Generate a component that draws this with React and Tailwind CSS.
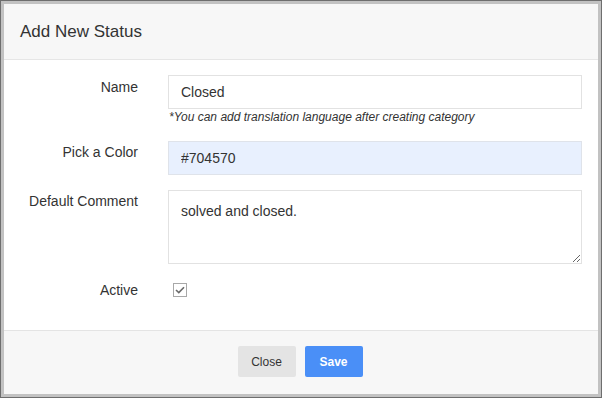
import React from "react";

export default function App() {
  return (
    <div className="w-[602px] h-[398px] bg-[#6e6e6e] p-px" style={{ fontFamily: '"Liberation Sans", Arial, sans-serif' }}>
      <div className="w-full h-full bg-[#c2c2c2] p-[3px]">
        <div className="w-full h-full bg-white flex flex-col">
          <div className="h-[56px] bg-[#f7f7f7] border-b border-[#e6e6e6] flex items-center pl-[16px] shrink-0">
            <h1 className="text-[17px] text-[#333] pt-[1px]">Add New Status</h1>
          </div>
          <div className="flex-1 flex flex-col pt-[15px] text-[14px] text-[#333]">
            <div className="flex">
              <label className="w-[134px] text-right pt-[2px]">Name</label>
              <div className="ml-[30px] w-[414px]">
                <input
                  readOnly
                  value="Closed"
                  className="w-full h-[34px] border border-[#e2e2e2] px-[12px] outline-none text-[14px] text-[#333] bg-white"
                />
                <div className="text-[12px] italic text-[#333] mt-[1px] pl-[1px] leading-[15px]">*You can add translation language after creating category</div>
              </div>
            </div>
            <div className="flex mt-[16px]">
              <label className="w-[134px] text-right pt-[1px]">Pick a Color</label>
              <div className="ml-[30px] w-[414px]">
                <input
                  readOnly
                  value="#704570"
                  className="w-full h-[34px] border border-[#dfe3ea] px-[12px] outline-none text-[14px] text-[#333] bg-[#e8f0fe]"
                />
              </div>
            </div>
            <div className="flex mt-[15px]">
              <label className="w-[134px] text-right pt-[1px]">Default Comment</label>
              <div className="ml-[30px] w-[414px]">
                <textarea
                  readOnly
                  value="solved and closed."
                  className="block w-full h-[74px] border border-[#e2e2e2] px-[12px] pt-[10px] outline-none text-[14px] text-[#333] bg-white"
                />
              </div>
            </div>
            <div className="flex mt-[17px]">
              <label className="w-[134px] text-right -mt-[1px]">Active</label>
              <div className="ml-[35px] pt-[2px]">
                <div className="w-[14px] h-[14px] border border-[#a8a8a8] bg-white flex items-center justify-center">
                  <svg width="10" height="8" viewBox="0 0 10 8">
                    <path d="M1 4 L3.8 6.6 L9 1.2" fill="none" stroke="#6a6a6a" strokeWidth="1.6" />
                  </svg>
                </div>
              </div>
            </div>
          </div>
          <div className="h-[64px] shrink-0 bg-[#f7f7f7] border-t border-[#e4e4e4] flex items-center justify-center gap-[9px] pr-[2px] pb-[2px]">
            <button className="w-[58px] h-[31px] bg-[#e4e4e4] rounded-[2px] text-[12px] text-[#333]">Close</button>
            <button className="w-[58px] h-[31px] bg-[#4a8ff7] rounded-[2px] text-[12px] font-bold text-white">Save</button>
          </div>
        </div>
      </div>
    </div>
  );
}
